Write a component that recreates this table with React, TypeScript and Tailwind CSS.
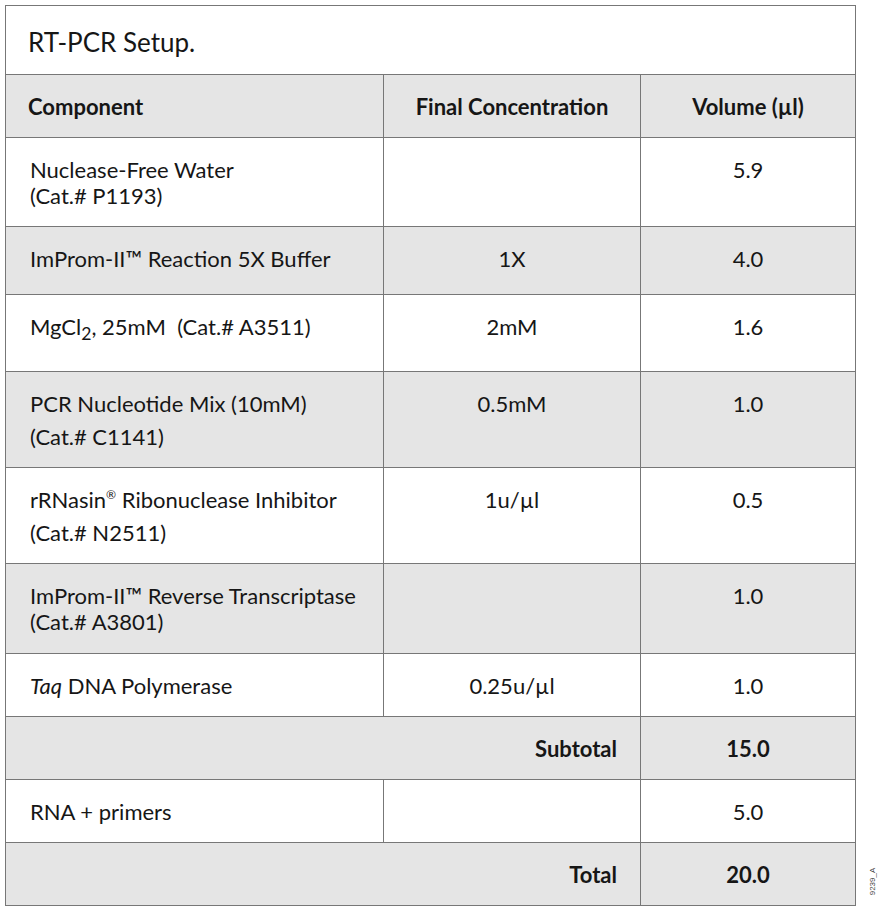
import React from "react";

const font = { fontFamily: "Lato, 'Open Sans', sans-serif" };

type Row = {
  a: React.ReactNode[];
  b?: string;
  c: string;
  gray: boolean;
  wide?: boolean;
};

const rows: Row[] = [
  { a: ["Nuclease-Free Water", "(Cat.# P1193)"], c: "5.9", gray: false },
  { a: ["ImProm-II™ Reaction 5X Buffer"], b: "1X", c: "4.0", gray: true },
  {
    a: [
      <span key="x">
        MgCl<span className="text-[0.8em] relative top-[0.3em] leading-none">2</span>, 25mM&nbsp;&nbsp;(Cat.# A3511)
      </span>,
    ],
    b: "2mM",
    c: "1.6",
    gray: false,
  },
  { a: ["PCR Nucleotide Mix (10mM)", "(Cat.# C1141)"], b: "0.5mM", c: "1.0", gray: true, wide: true },
  {
    a: [
      <span key="x">
        rRNasin<span className="text-[0.55em] relative -top-[0.75em] leading-none">®</span> Ribonuclease Inhibitor
      </span>,
      "(Cat.# N2511)",
    ],
    b: "1u/µl",
    c: "0.5",
    gray: false,
    wide: true,
  },
  { a: ["ImProm-II™ Reverse Transcriptase", "(Cat.# A3801)"], c: "1.0", gray: true },
  {
    a: [
      <span key="x">
        <i>Taq</i> DNA Polymerase
      </span>,
    ],
    b: "0.25u/µl",
    c: "1.0",
    gray: false,
  },
];

export default function App() {
  const bg = (g: boolean) => (g ? "bg-[#e5e5e5]" : "bg-white");
  return (
    <div className="relative w-[882px] h-[910px] bg-white pl-[5px] pt-[5px] text-[#161616]" style={font}>
      <div className="grid w-[851px] grid-cols-[377px_256px_214px] grid-rows-[68px_62px_88px_67px_76px_95px_95px_89px_62px_62px_62px_62px] gap-px bg-[#777777] border border-[#777777] text-[22px] leading-[26px]">
        <div className="col-span-3 bg-white pl-[22px] pt-[20px] text-[26px] leading-[32px]">RT-PCR Setup.</div>

        <div className="bg-[#e5e5e5] pl-[22px] pt-[19px] font-bold">Component</div>
        <div className="bg-[#e5e5e5] pt-[19px] font-bold text-center">Final Concentration</div>
        <div className="bg-[#e5e5e5] pt-[19px] font-bold text-center">Volume (µl)</div>

        {rows.map((r, i) => (
          <React.Fragment key={i}>
            <div className={`${bg(r.gray)} pl-[24px] pt-[19px]`}>
              {r.a.map((line, j) => (
                <div key={j} className={j > 0 && r.wide ? "mt-[7px]" : ""}>
                  {line}
                </div>
              ))}
            </div>
            <div className={`${bg(r.gray)} pt-[19px] text-center`}>{r.b ?? ""}</div>
            <div className={`${bg(r.gray)} pt-[19px] text-center`}>{r.c}</div>
          </React.Fragment>
        ))}

        <div className="col-span-2 bg-[#e5e5e5] pt-[19px] pr-[23px] text-right font-bold">Subtotal</div>
        <div className="bg-[#e5e5e5] pt-[19px] text-center font-bold">15.0</div>

        <div className="bg-white pl-[24px] pt-[19px]">RNA + primers</div>
        <div className="bg-white" />
        <div className="bg-white pt-[19px] text-center">5.0</div>

        <div className="col-span-2 bg-[#e5e5e5] pt-[19px] pr-[23px] text-right font-bold">Total</div>
        <div className="bg-[#e5e5e5] pt-[19px] text-center font-bold">20.0</div>
      </div>

      <div
        className="absolute left-[859px] top-[877px] text-[8px] leading-[9px] text-[#444] -rotate-90 origin-center"
        style={{ fontFamily: "'Liberation Sans', sans-serif" }}
      >
        9239_A
      </div>
    </div>
  );
}
